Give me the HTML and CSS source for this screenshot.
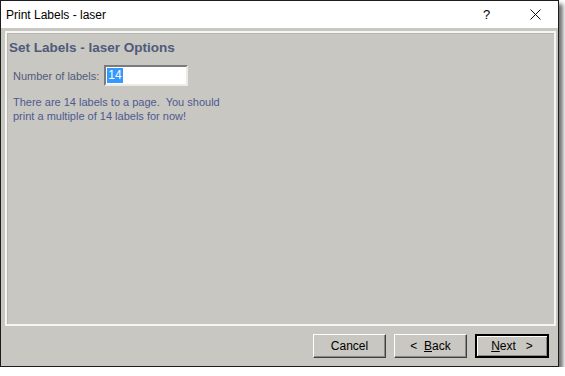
FILE: index.html
```html
<!DOCTYPE html>
<html lang="en">
<head>
    <meta charset="UTF-8">
    <title>Print Labels - laser</title>
    <link rel="stylesheet" href="styles.css">
</head>
<body>
    <div class="window">
        <div class="titlebar">
            <span class="title">Print Labels - laser</span>
            <span class="help">?</span>
            <span class="close">
                <svg width="11" height="11" viewBox="0 0 11 11"><path d="M0.5 0.5 L10.5 10.5 M10.5 0.5 L0.5 10.5" stroke="#111" stroke-width="1" fill="none"/></svg>
            </span>
        </div>
        <div class="panel">
            <h1>Set Labels - laser Options</h1>
            <div class="field">
                <label>Number of labels:</label>
                <div class="input"><span class="sel">14</span></div>
            </div>
            <p class="note">There are 14 labels to a page.&nbsp; You should<br>print a multiple of 14 labels for now!</p>
        </div>
        <div class="footer">
            <button class="btn">Cancel</button>
            <button class="btn">&lt;&nbsp; <u>B</u>ack</button>
            <button class="btn default"><u>N</u>ext&nbsp;&nbsp; &gt;</button>
        </div>
    </div>
</body>
</html>
```

FILE: styles.css
```css
body {
    margin: 0;
    background-color: #ffffff;
    font-family: 'Liberation Sans', Arial, sans-serif;
}

.window {
    width: 557px;
    height: 365px;
    border: 1px solid #1c1c1c;
    background-color: #c9c7c1;
    box-shadow: 4px 4px 4px rgba(0, 0, 0, 0.55);
    display: flex;
    flex-direction: column;
}

.titlebar {
    height: 27px;
    background-color: #ffffff;
    display: flex;
    align-items: center;
    font-size: 12px;
    color: #000;
}

.title {
    padding-left: 5px;
    flex: 1;
}

.help {
    width: 14px;
    font-size: 13px;
    margin-right: 33px;
}

.close {
    display: flex;
    margin-right: 17px;
}

.panel {
    margin: 3px 2px 0 4px;
    height: 291px;
    border: 2px solid #f6f6f4;
    box-shadow: inset 1px 1px 0 #b8b6b0;
    padding: 0 2px;
}

h1 {
    margin: 7px 0 0 0;
    font-family: 'Liberation Sans', Arial, sans-serif;
    font-size: 13.5px;
    font-weight: bold;
    color: #4e5b7b;
}

.field {
    display: flex;
    align-items: center;
    margin: 10px 0 0 4px;
    font-size: 11px;
    color: #4e5b7b;
}

.field label {
    margin-right: 5px;
}

.input {
    width: 79px;
    height: 17px;
    background-color: #fff;
    border-top: 2px solid #7b7b7b;
    border-left: 2px solid #7b7b7b;
    border-right: 2px solid #ecebe8;
    border-bottom: 2px solid #ecebe8;
    padding: 0 0 0 1px;
    display: flex;
    align-items: center;
}

.sel {
    background-color: #3399ff;
    color: #fff;
    font-size: 12px;
    line-height: 15px;
    padding: 0 1px;
}

.note {
    margin: 9px 0 0 4px;
    font-size: 11px;
    line-height: 14px;
    color: #4d5a92;
}

.footer {
    flex: 1;
    display: flex;
    justify-content: flex-end;
    align-items: flex-start;
    gap: 8px;
    padding: 8px 9px 0 0;
}

.btn {
    width: 73px;
    height: 24px;
    background-color: #c9c7c1;
    border-top: 1px solid #ffffff;
    border-left: 1px solid #ffffff;
    border-right: 1px solid #404040;
    border-bottom: 1px solid #404040;
    box-shadow: inset -1px -1px 0 #8a8984;
    font-family: 'Liberation Sans', Arial, sans-serif;
    font-size: 12px;
    color: #000;
    padding: 0;
}

.btn u {
    text-decoration: underline;
}

.btn.default {
    width: 74px;
    border: 2px solid #000;
    box-shadow: inset 1px 1px 0 #ffffff, inset -1px -1px 0 #8a8984;
}
```
